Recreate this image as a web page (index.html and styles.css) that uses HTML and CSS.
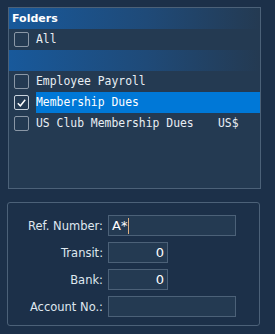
FILE: index.html
```html
<!DOCTYPE html>
<html>
<head>
<meta charset="utf-8">
<link rel="stylesheet" href="styles.css">
</head>
<body>
<div class="list">
  <div class="row grad header">Folders</div>
  <div class="row plain"><span class="cb"></span><span class="txt">All</span></div>
  <div class="row grad"></div>
  <div class="row plain"><span class="cb"></span><span class="txt">Employee Payroll</span></div>
  <div class="row plain"><span class="cb checked"><svg width="14" height="14" viewBox="0 0 14 14"><path d="M3 7.2 L5.8 10 L11 3.6" fill="none" stroke="#ffffff" stroke-width="1.6"/></svg></span><span class="txt sel">Membership Dues</span></div>
  <div class="row plain"><span class="cb"></span><span class="txt name">US Club Membership Dues</span><span class="txt cur">US$</span></div>
</div>
<div class="form">
  <div class="field"><label class="lbl">Ref. Number:</label><div class="inp wide"><span class="val">A*</span><span class="caret"></span></div></div>
  <div class="field"><label class="lbl">Transit:</label><div class="inp short num"><span class="val">0</span></div></div>
  <div class="field"><label class="lbl">Bank:</label><div class="inp short num"><span class="val">0</span></div></div>
  <div class="field"><label class="lbl">Account No.:</label><div class="inp wide"></div></div>
</div>
</body>
</html>
```
FILE: styles.css
```css
html, body {
  margin: 0;
  padding: 0;
  background: #1c3049;
  width: 275px;
  height: 334px;
  overflow: hidden;
}
.list {
  margin: 7px 0 0 8px;
  width: 251px;
  height: 180px;
  border: 1px solid #4c6178;
  background: #243a52;
}
.row {
  height: 21px;
  display: flex;
  align-items: center;
}
.grad {
  background: linear-gradient(to right, #18599b 0%, #1f4a78 55%, #243a52 100%);
}
.header {
  font-family: "DejaVu Sans", sans-serif;
  font-weight: bold;
  font-size: 11px;
  color: #ffffff;
  padding-left: 3px;
}
.cb {
  width: 13px;
  height: 13px;
  border: 1px solid #8a97a6;
  border-radius: 2px;
  margin-left: 5px;
  margin-right: 7px;
  flex: none;
  display: flex;
  align-items: center;
  justify-content: center;
}
.cb svg { display: block; }
.checked { border-color: #c8d2dc; }
.txt {
  font-family: "DejaVu Sans Mono", monospace;
  font-size: 11.4px;
  color: #e8eef4;
  height: 21px;
  line-height: 20px;
  white-space: pre;
}
.sel {
  flex: 1;
  background: #0078d7;
  color: #ffffff;
}
.name { width: 182px; }
.form {
  margin: 13px 0 0 7px;
  width: 253px;
  border: 1px solid #4c6178;
  border-radius: 3px;
  padding-top: 12px;
  box-sizing: border-box;
  height: 124px;
  display: flex;
  flex-direction: column;
  gap: 6px;
}
.field {
  display: flex;
  align-items: center;
  height: 21px;
}
.lbl {
  width: 95px;
  text-align: right;
  font-family: "DejaVu Sans", sans-serif;
  font-size: 11.5px;
  color: #dfe7ef;
  padding-right: 5px;
}
.inp {
  height: 19px;
  border: 1px solid #4c6178;
  background: #243a52;
  display: flex;
  align-items: center;
  font-family: "DejaVu Sans", sans-serif;
  font-size: 13px;
  color: #ffffff;
  padding: 0 3px;
}
.wide { width: 120px; }
.short { width: 52px; }
.num { justify-content: flex-end; }
.caret {
  width: 1px;
  height: 16px;
  background: #e0b080;
  margin-left: 1px;
}
```
